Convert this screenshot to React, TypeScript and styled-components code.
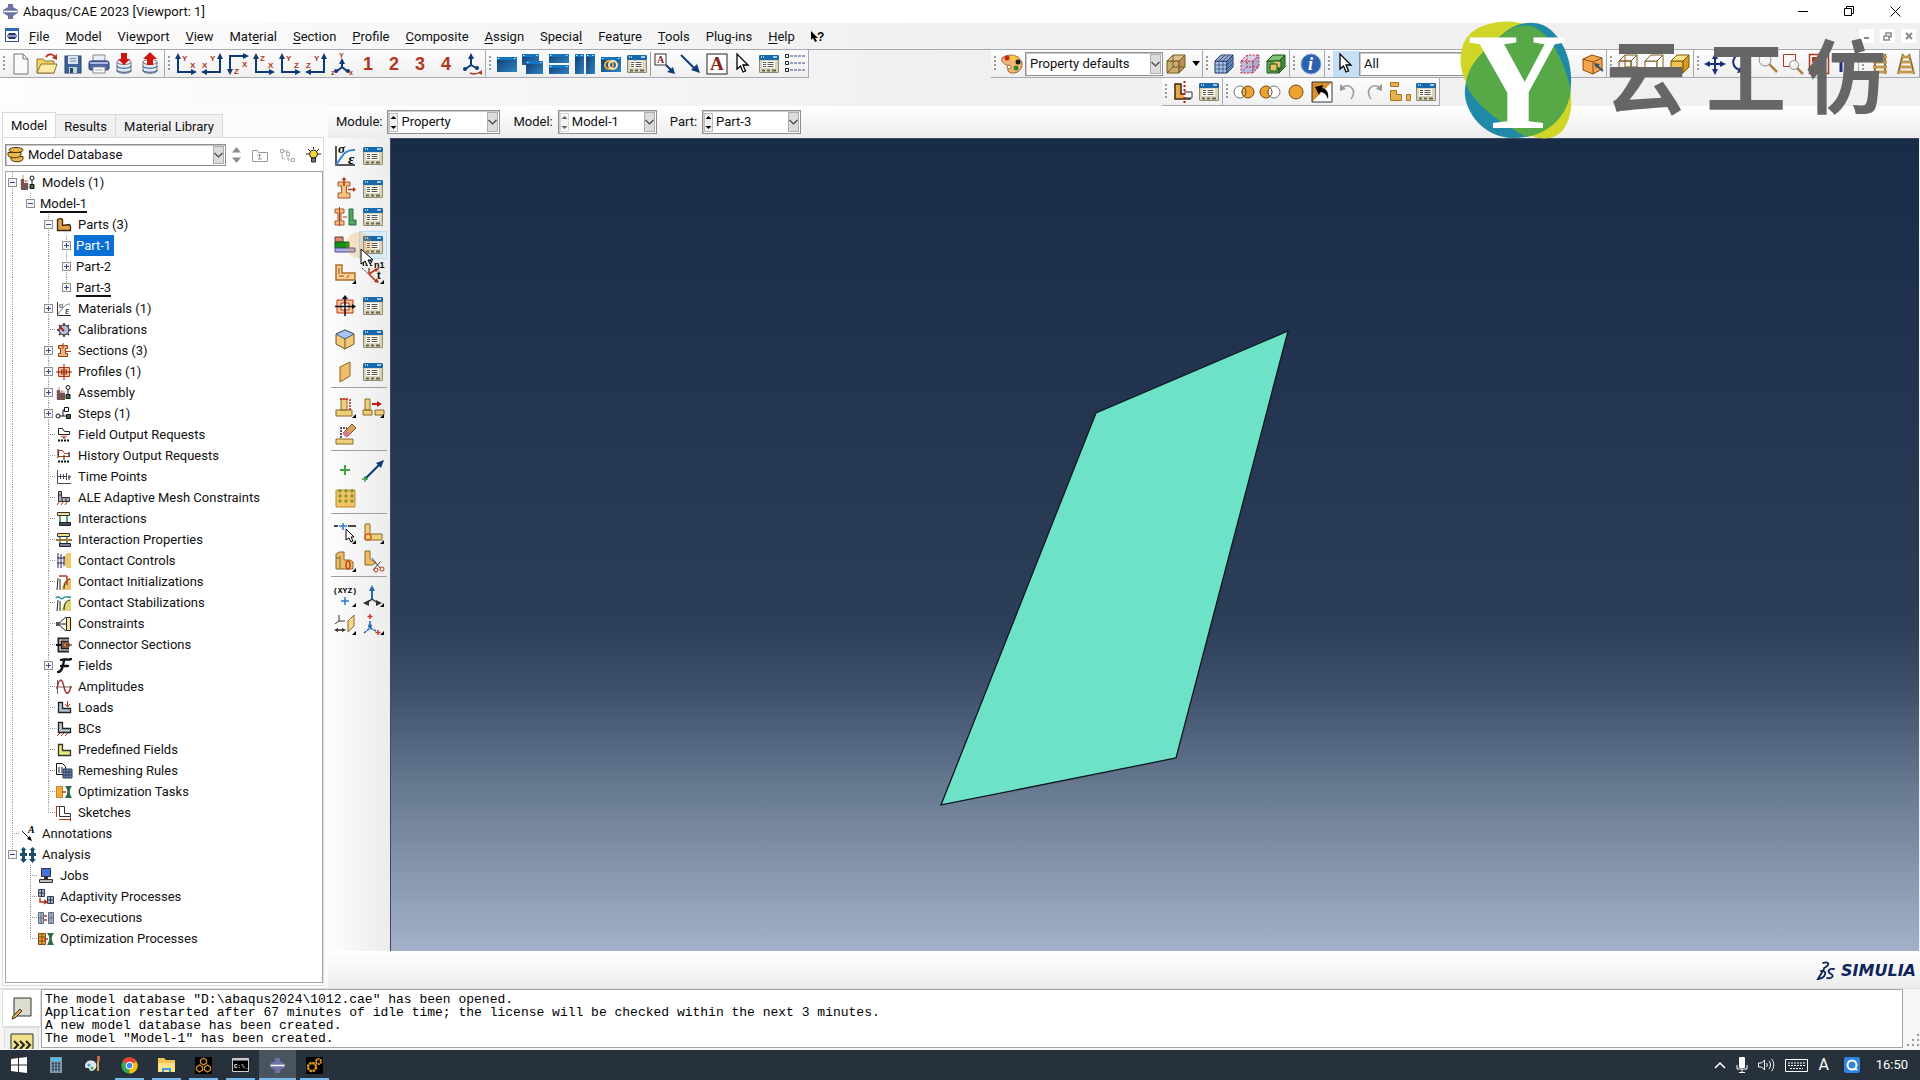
import React from 'react';
import styled, { createGlobalStyle, css } from 'styled-components';

const UI = 'Roboto, "Noto Sans CJK SC", sans-serif';
const MONO = '"Liberation Mono", "Noto Sans CJK SC", monospace';

const GlobalStyle = createGlobalStyle`
  *, *::before, *::after { box-sizing: border-box; }
  body { margin: 0; background: #f0f0f0; color: #111; font: 13px/16px ${UI}; overflow: hidden; }
  button, select, textarea { font: inherit; color: inherit; }
  ul { list-style: none; margin: 0; padding: 0; }
  svg { display: block; flex: none; }
`;

/* ---------- icons ---------- */

const NAVY = '#0f3a78';
const RED = '#b3361b';
const GOLD = '#e8b04e';
const LINE = '#7a5a1e';

type Pt = [number, number];

const head = (x: number, y: number, d: 'u' | 'd' | 'l' | 'r', c = NAVY, s = 3) => {
  const p: Record<string, string> = {
    u: `${x},${y - s} ${x - s},${y + s} ${x + s},${y + s}`,
    d: `${x},${y + s} ${x - s},${y - s} ${x + s},${y - s}`,
    l: `${x - s},${y} ${x + s},${y - s} ${x + s},${y + s}`,
    r: `${x + s},${y} ${x - s},${y - s} ${x - s},${y + s}`,
  };
  return <polygon points={p[d]} fill={c} />;
};

const Letter = ({ x, y, s = 8, c = RED, children }: { x: number; y: number; s?: number; c?: string; children: string }) => (
  <text x={x} y={y} fontSize={s} fontWeight="700" fill={c} fontFamily="Liberation Sans, sans-serif">{children}</text>
);

const axes = (o: Pt, v: 'u' | 'd', h: 'l' | 'r', a: string, ap: Pt, b: string, bp: Pt) => {
  const vy = v === 'u' ? 2 : 20;
  const hx = h === 'r' ? 20 : 2;
  return (
    <>
      <path d={`M${o[0]} ${vy}V${o[1]}H${hx}`} fill="none" stroke={NAVY} strokeWidth="2" />
      {head(o[0], vy + (v === 'u' ? 1 : -1), v)}
      {head(hx + (h === 'r' ? -1 : 1), o[1], h)}
      <Letter x={ap[0]} y={ap[1]}>{a}</Letter>
      <Letter x={bp[0]} y={bp[1]}>{b}</Letter>
    </>
  );
};

const managerTable = (
  <>
    <rect x="1" y="2" width="20" height="18" rx="1.5" fill="#8f8a72" />
    <rect x="1" y="2" width="20" height="5" rx="1.5" fill="#1769ac" />
    <path d="M3 4h1M5 4h1M15 4h4" stroke="#cfe6f7" strokeWidth="1.5" />
    <rect x="2" y="7" width="18" height="12" fill="#d9d4bd" />
    <rect x="4" y="8" width="13" height="7" fill="#fffef4" />
    <path d="M5 9.500h3M9.500 9.500h6M5 11.500h3M9.500 11.500h6M5 13.500h3M9.500 13.500h6" stroke="#555" />
    <path d="M4 17.500h3M9 17.500h3M14 17.500h4" stroke="#6b6548" strokeWidth="2" />
  </>
);

const win = (x: number, y: number, w: number, h: number) => (
  <>
    <rect x={x} y={y} width={w} height={h} fill="url(#winfill)" />
    <path d={`M${x} ${y + 1.5}h${w}`} stroke="#1374c2" strokeWidth="3" />
    <path d={`M${x + 1} ${y + 1.5}h1.500M${x + w - 3} ${y + 1.5}h1.500`} stroke="#cfe8fb" />
  </>
);

const cube = (front: string, top: string, side: string, stroke: string, dash?: string) => (
  <g stroke={stroke} strokeLinejoin="round" strokeDasharray={dash}>
    <path d="M2 8h12v12H2z" fill={front} />
    <path d="M2 8l6-6h12l-6 6z" fill={top} />
    <path d="M14 8l6-6v12l-6 6z" fill={side} />
  </g>
);

const cylinder = (
  <>
    <path d="M3 9v9c0 3 14 3 14 0V9" fill="#e3e9f2" stroke="#777" />
    <path d="M3 13c0 3 14 3 14 0M3 17c0 3 14 3 14 0" fill="none" stroke="#24508c" />
    <ellipse cx="10" cy="9" rx="7" ry="2.500" fill="#f7f9fc" stroke="#777" />
  </>
);

const arrowCursor = (fill: string) => (
  <path d="M5 1v15l3.500-3 2.500 6 2.500-1-2.500-6H16z" fill={fill} stroke="#000" strokeWidth="1.300" />
);

const ibeam = (
  <>
    <path d="M4 4h12v4h-3.500v7H16v5H4v-5h3.500V8H4z" fill="#f3c083" stroke="#a65a22" />
    <path d="M10 0v8M14 11.500h7" stroke={RED} strokeWidth="1.500" />
    <path d="M10-1L7.500 2h5zM22 11.500L19 9v5z" fill={RED} />
  </>
);

const magnifier = (x: number, y: number, r: number) => (
  <>
    <path d={`M${x + r * 0.7} ${y + r * 0.7}L${x + r * 2} ${y + r * 2}`} stroke="#b07f45" strokeWidth="2.500" />
    <circle cx={x} cy={y} r={r} fill="#f1f1f1" stroke="#8f8f8f" />
    <circle cx={x - r / 3} cy={y - r / 3} r={r / 3} fill="#fff" />
  </>
);

const more = <path d="M22 18v4h-4z" fill="#000" />;

const ICONS: Record<string, React.ReactNode> = {
  new: <path d="M4 1h9l5 5v15H4zM13 1v5h5" fill="#fafafa" stroke="#777" />,
  open: (
    <>
      <path d="M1 6h6l2 2h9v12H1z" fill="#f5cf63" stroke="#8a7436" />
      <path d="M5 11h16l-3 9H1z" fill="#ffe9a6" stroke="#8a7436" />
      <path d="M10 4c3-4 7-3 9 0" fill="none" stroke={RED} strokeWidth="2" />
      <path d="M21 1v6l-5-2z" fill={RED} />
    </>
  ),
  save: (
    <>
      <rect x="3" y="3" width="16" height="17" fill="#3d6598" stroke="#27456d" />
      <rect x="6" y="3" width="10" height="8" fill="#dbe4ee" />
      <path d="M8 5.500h6M8 8h6" stroke="#7892b1" />
      <rect x="7" y="14" width="8" height="6" fill="#c8d1da" />
      <rect x="8" y="15" width="3" height="5" fill="#27456d" />
    </>
  ),
  print: (
    <>
      <path d="M5 2h12v6H5z" fill="#e9eef8" stroke="#888" />
      <rect x="1" y="8" width="20" height="9" rx="2" fill="#4c63a4" stroke="#2d3c71" />
      <path d="M2 10h18" stroke="#a9b9e4" strokeWidth="2" />
      <path d="M5 14h12v6H5z" fill="#fff" stroke="#888" />
      <path d="M7 17h8" stroke="#9aa" />
    </>
  ),
  dbin: <>{cylinder}<path d="M7 0h6v6h3l-6 6-6-6h3z" fill="#cf1512" /></>,
  dbout: <>{cylinder}<path d="M7 12V6H3l7-7 7 7h-4v6z" fill="#cf1512" /></>,
  xy: axes([3, 19], 'u', 'r', 'Y', [7, 8], 'X', [15, 15]),
  yx: axes([19, 19], 'u', 'l', 'Y', [9, 8], 'X', [1, 15]),
  xz: axes([3, 3], 'd', 'r', 'Z', [7, 21], 'X', [15, 14]),
  zx: axes([3, 19], 'u', 'r', 'Z', [7, 8], 'X', [15, 15]),
  yz: axes([3, 19], 'u', 'r', 'Y', [7, 8], 'Z', [15, 15]),
  zy: axes([19, 19], 'u', 'l', 'Y', [9, 8], 'Z', [1, 15]),
  iso: (
    <>
      <path d="M11 7v7l-6 5M11 14l6 5" fill="none" stroke={NAVY} strokeWidth="2" />
      {head(11, 8, 'u')}
      <circle cx="5" cy="18" r="2" fill={NAVY} /><circle cx="17" cy="18" r="2" fill={NAVY} />
      <Letter x={8} y={5} s={7}>Y</Letter><Letter x={0} y={22} s={7}>z</Letter><Letter x={18} y={22} s={7}>x</Letter>
    </>
  ),
  view: (
    <>
      <path d="M10 2v10l-7 5M10 12l7 4" fill="none" stroke={NAVY} strokeWidth="2" />
      {head(10, 3, 'u')}
      <circle cx="4" cy="16" r="2" fill={NAVY} /><circle cx="16" cy="15" r="2" fill={NAVY} />
      <path d="M9 20c4 2 7 1 10-1" fill="none" stroke={RED} strokeWidth="1.500" /><path d="M21 17v5l-4-2z" fill={RED} />
    </>
  ),
  win1: win(1, 4, 20, 15),
  win2: <>{win(0, 1, 17, 11)}{win(4, 8, 17, 13)}</>,
  win3: <>{win(1, 1, 20, 9)}{win(1, 12, 20, 9)}</>,
  win4: <>{win(1, 1, 9, 20)}{win(12, 1, 9, 20)}</>,
  win5: (
    <>
      {win(1, 4, 20, 15)}
      <circle cx="9" cy="12" r="4" fill="none" stroke="#f5a623" strokeWidth="2" />
      <circle cx="13" cy="12" r="4" fill="none" stroke="#fbe4b4" strokeWidth="2" />
    </>
  ),
  table: managerTable,
  annArrow: (
    <>
      <rect x="1" y="1" width="11" height="11" fill="#fff" stroke="#333" />
      <text x="3" y="10" fontSize="10" fontWeight="700" fill="#8b2015" fontFamily="Liberation Serif, serif">A</text>
      <path d="M12 12l6 6" stroke={NAVY} strokeWidth="2" /><path d="M21 21l-8-2 6-5z" fill={NAVY} />
    </>
  ),
  arrow: <><path d="M1 2l14 14" stroke={NAVY} strokeWidth="2" /><path d="M20 20l-9-3 6-6z" fill={NAVY} /></>,
  text: (
    <>
      <rect x="1" y="1" width="20" height="20" fill="#fff" stroke="#222" />
      <text x="4" y="17" fontSize="19" fontWeight="700" fill="#8b2015" fontFamily="Liberation Serif, serif">A</text>
    </>
  ),
  cursor: arrowCursor('#fff'),
  legend: (
    <>
      <path d="M1.500 1.500h3v3h-3zM1.500 8.500h3v3h-3zM1.500 15.500h3v3h-3z" fill="#fff" stroke="#222" />
      <path d="M6 3h15M6 10h15M6 17h15" stroke="#2c4a86" strokeDasharray="3 1" />
    </>
  ),
  palette: (
    <>
      <path d="M1 5c5-4 17-5 20 5 1 9-9 12-13 9-3-2 1-5-2-7-4-1-6-4-5-7z" fill="#f3b574" stroke="#a5622a" />
      <circle cx="6" cy="5" r="2.500" fill="#c8251c" /><circle cx="12" cy="5" r="2.500" fill="#f2d224" />
      <circle cx="17" cy="9" r="2.500" fill="#1b1b1b" /><circle cx="15" cy="15" r="2.500" fill="#2e8a2c" />
      <circle cx="8" cy="14" r="2" fill="#fff" stroke="#a5622a" />
    </>
  ),
  cubeTan: <>{cube('#c9ac74', '#d9c08e', '#b59458', '#7a5a1e')}<path d="M8 2v12h12M8 14l-6 6" fill="none" stroke="#7a5a1e" /></>,
  meshBlue: (
    <>
      {cube('#a3bfe6', '#c4d8f2', '#84a3d1', '#1f3566')}
      <path d="M6 8v12M10 8v12M2 12h12M2 16h12M6 8l6-6M10 8l6-6M14 12l6-6M14 16l6-6M4 6h12v12M18 4v12M6 4h12" fill="none" stroke="#1f3566" strokeWidth=".6" />
    </>
  ),
  meshRed: <>{cube('#b6bcdf', '#d2d5ec', '#a5abd1', '#cb2335', '2 1.500')}<path d="M8 2v12h12M8 14l-6 6" fill="none" stroke="#cb2335" strokeDasharray="2 1.500" /></>,
  meshGreen: <>{cube('#5fae57', '#7cc474', '#3f8e3b', '#1d4f1b')}<path d="M5 11h7v7H5zM8 8h8v7h-4" fill="#dfc36c" stroke="#1d4f1b" /></>,
  info: (
    <>
      <circle cx="11" cy="11" r="10" fill="#2c62ae" stroke="#8aa6cf" />
      <text x="8" y="17" fontSize="18" fontStyle="italic" fontWeight="700" fill="#fff" fontFamily="Liberation Serif, serif">i</text>
    </>
  ),
  dot: <><circle cx="6" cy="11" r="4" fill={GOLD} stroke="#5b3d0c" /><path d="M8 21v-3l-3 3z" /></>,
  cubeOrange: (
    <>
      <path d="M1 6l9-4 10 3v11l-9 5-10-4z" fill="#f3a64d" stroke="#8a4a10" />
      <path d="M1 6l10 3 9-4M11 9v12" fill="none" stroke="#8a4a10" />
      <path d="M21 18l-7-6" stroke="#35506f" strokeWidth="2" /><path d="M12 10l6 1-4 4z" fill="#35506f" />
    </>
  ),
  cubeWire: <>{cube('none', 'none', 'none', LINE)}<path d="M8 2v12h12M8 14l-6 6" fill="none" stroke={LINE} /></>,
  cubeHid: cube('#fff', '#fff', '#fff', LINE),
  cubeGold: cube('#f2c14e', '#fbe08f', '#d99b1f', '#7d5708'),
  pan: (
    <>
      <path d="M11 3v16M3 11h16" stroke="#1d2f7c" strokeWidth="2" />
      {head(11, 3, 'u', '#1d2f7c')}{head(11, 19, 'd', '#1d2f7c')}{head(3, 11, 'l', '#1d2f7c')}{head(19, 11, 'r', '#1d2f7c')}
    </>
  ),
  rotate: <><path d="M6 3c-5 5-3 12 4 14" fill="none" stroke="#1d2f7c" strokeWidth="2" /><path d="M14 19l-7 1 3-6z" fill="#1d2f7c" /></>,
  zoom: magnifier(9, 7, 6),
  zoomBox: <><path d="M1.500 1.500h12v12h-12z" fill="none" stroke={RED} />{magnifier(12, 12, 4.5)}</>,
  fit: (
    <>
      <path d="M1.500 1.500h19v19h-19z" fill="none" stroke={RED} strokeWidth="1.500" />
      <path d="M4 4h6l-6 6zM18 18h-6l6-6z" fill={RED} />
      <path d="M5 5l12 12" stroke={RED} strokeWidth="1.500" strokeDasharray="5 3" />
    </>
  ),
  cycle: <><path d="M7 4v15M15 3v15" stroke="#1d2f7c" strokeWidth="3" />{head(7, 4, 'u', '#1d2f7c', 4)}{head(15, 17, 'd', '#1d2f7c', 4)}</>,
  para: (
    <>
      <path d="M6 1v20M16 1v20" stroke="#8a6a31" strokeWidth="2" />
      <path d="M4 4h14M4 9h14M4 14h14M4 19h14" stroke="#c39a4f" strokeWidth="3" />
    </>
  ),
  persp: (
    <>
      <path d="M8 1L3 21M14 1l5 20" stroke="#8a6a31" strokeWidth="2" />
      <path d="M7 4h8M6 9h10M5 14h12M3 19h16" stroke="#c39a4f" strokeWidth="3" />
    </>
  ),
  lpart: (
    <>
      <path d="M3 3h6v10h9v5H3z" fill="#eaa84d" stroke="#3b2a0d" strokeWidth="1.500" />
      <path d="M12 11h8v6h-8" fill="#fff" stroke="#333" />
      <path d="M12.500 0v22" stroke="#c01818" strokeWidth="2" strokeDasharray="2 2" />
    </>
  ),
  circR: (
    <>
      <circle cx="7" cy="11" r="6" fill="#fff" stroke="#777" /><circle cx="15" cy="11" r="6" fill="#f0a22e" stroke="#6d4a10" />
      <path d="M11 6.500a6 6 0 010 9 6 6 0 010-9z" fill="#e6b36a" stroke="#6d4a10" />
    </>
  ),
  circL: (
    <>
      <circle cx="7" cy="11" r="6" fill="#f0a22e" stroke="#6d4a10" /><circle cx="15" cy="11" r="6" fill="#fff" stroke="#777" />
      <path d="M11 6.500a6 6 0 010 9 6 6 0 010-9z" fill="#fff" stroke="#6d4a10" />
    </>
  ),
  circ: <circle cx="11" cy="11" r="7" fill="#f0a22e" stroke="#6d4a10" />,
  replace: (
    <>
      <path d="M1 1h20v20H1z" fill="#fff" /><path d="M1 1h20L1 21z" fill="#d98f2b" />
      <path d="M1 1h20v20H1z" fill="none" stroke="#333" />
      <path d="M4 6l8-2-1 3c5 1 7 5 6 11-2-5-4-7-8-7l-1 3z" fill="#000" />
    </>
  ),
  undo: <><path d="M6 6c8-4 14 4 8 12" fill="none" stroke="#9a9a9a" strokeWidth="1.500" /><path d="M3 3v7l6-2z" fill="#9a9a9a" /></>,
  redo: <><path d="M16 6c-8-4-14 4-8 12" fill="none" stroke="#9a9a9a" strokeWidth="1.500" /><path d="M19 3v7l-6-2z" fill="#9a9a9a" /></>,
  bars: (
    <g fill={GOLD} stroke="#a57524">
      <path d="M1.500 1.500h8v4h-8zM1.500 9.500h6v4h5v6h-11zM17.500 13.500h4v6h-4z" />
    </g>
  ),
  /* toolbox */
  sigma: (
    <>
      <path d="M2 1v19h19" fill="none" stroke="#222" strokeWidth="1.500" />
      <path d="M2 20C8 12 10 4 21 5" fill="none" stroke="#3485d6" strokeWidth="2" />
      <text x="4" y="8" fontSize="13" fontWeight="700" fontStyle="italic" fontFamily="Liberation Serif, serif">σ</text>
      <text x="14" y="19" fontSize="15" fontWeight="700" fontStyle="italic" fontFamily="Liberation Serif, serif">ε</text>
    </>
  ),
  ibeam,
  ibeamL: (
    <>
      <path d="M1 3h9v4H7v8h3v4H1v-4h3V7H1z" fill="#f3c083" stroke="#a65a22" />
      <path d="M5.500 1v19M9 11h4" stroke={RED} />
      <path d="M15 3h4v11h3v5h-7z" fill="#4fa565" stroke="#2c6e3d" />
    </>
  ),
  layers: (
    <>
      <path d="M1 3h8v5H1z" fill="#d98a72" stroke="#6b3b2a" />
      <path d="M1 8h14v6H1z" fill="#129312" stroke="#0b5c0b" />
      <path d="M1 14h20v4H1z" fill="#a9aee8" stroke="#4a4d8c" />
    </>
  ),
  lplate: <><path d="M2 3h6v8h13v7H2z" fill="#f7cf97" stroke="#a8702a" strokeWidth="1.500" /><path d="M5 6v6M5 14l5 0M15 13l-2 3" stroke={RED} />{more}</>,
  normals: (
    <>
      <path d="M0 6l15 14" stroke="#333" strokeDasharray="2 1" />
      <path d="M7 12l8-5M7 12V6M7 12l7 7" stroke={RED} strokeWidth="1.500" />
      <path d="M17 21l-5-1 3-4zM18 6l-4 4-2-3z" fill={RED} />
      <Letter x={0} y={4} s={9} c="#000">n2</Letter><Letter x={12} y={6} s={9} c="#000">n1</Letter><Letter x={15} y={17} s={11} c="#000">t</Letter>{more}
    </>
  ),
  profile: (
    <>
      <path d="M3 5h16v13H3z" fill="#f7c79a" stroke={RED} /><path d="M7 8h8v7H7z" fill="#fff" stroke={RED} />
      <path d="M11 1v20M1 11.500h20" stroke="#111" strokeWidth="1.500" />
      <path d="M11 0L8 4h6zM22 11.500L18 9v5z" fill="#111" />
    </>
  ),
  skin: (
    <>
      <path d="M11 2l9 4v10l-9 5-9-5V6z" fill="#f2c87b" stroke="#74501a" />
      <path d="M11 2l9 4-9 5-9-5z" fill="#a8c4f2" stroke="#46597f" /><path d="M11 11v10" stroke="#74501a" />
    </>
  ),
  shell: <path d="M6 6l10-5v14L6 21z" fill="#f2bd66" stroke="#8a6122" />,
  tee: (
    <>
      <path d="M2 14h16v6H2zM7 3h6v11H7z" fill="#f0cf7b" stroke="#8a6a2a" />
      <path d="M6 3h9M16 3v12" stroke="#c01818" strokeDasharray="2 1" strokeWidth="1.500" />{more}
    </>
  ),
  teeMove: (
    <>
      <path d="M1 14h9v5H1zM3 3h5v11H3zM13 14h9v5h-9z" fill="#f0cf7b" stroke="#8a6a2a" />
      <path d="M10 8h6" stroke="#c01818" strokeWidth="2" /><path d="M20 8l-5-3v6z" fill="#c01818" />{more}
    </>
  ),
  erase: (
    <>
      <path d="M2 15h17v5H2z" fill="#f0cf7b" stroke="#8a6a2a" />
      <path d="M7 14V4h6" fill="none" stroke="#222" strokeDasharray="2 1" strokeWidth="1.500" />
      <path d="M9 9l9-9 4 4-9 9z" fill="#d7a25e" stroke="#7a5420" /><path d="M9 9l3-3 4 4-3 3-3-1z" fill="#d27a93" />
    </>
  ),
  plus: <path d="M11 6v10M6 11h10" stroke="#3fa34a" strokeWidth="2" />,
  datumAxis: (
    <>
      <path d="M3 20L17 6" stroke={NAVY} strokeWidth="2" /><path d="M22 1l-3 8-5-5z" fill={NAVY} />
      <path d="M3 17v6M0 20h6" stroke="#3fa34a" strokeWidth="1.500" />
    </>
  ),
  grid: (
    <>
      <path d="M2 3h19v17H2z" fill="#f4c260" stroke="#b98a2f" />
      <path d="M4 4h4M10 4h4M16 4h4M4 9h4M10 9h4M16 9h4M4 14h4M10 14h4M16 14h4M6 2v4M12 2v4M18 2v4M6 7v4M12 7v4M18 7v4M6 12v4M12 12v4M18 12v4" stroke="#5c8f2b" />
    </>
  ),
  partEdge: (
    <>
      <path d="M0 4h4M14 4h8" stroke="#111" strokeWidth="1.500" /><path d="M9 1v7M5 4h8" stroke="#2b78d0" strokeWidth="1.500" />
      <path d="M12 7v11l3-2 2 4 2-1-2-4h3z" fill="#fff" stroke="#000" />{more}
    </>
  ),
  lround: <><path d="M3 2h5v10h12v6H3z" fill="#f0cf7b" stroke="#8a6a2a" /><circle cx="6" cy="15" r="3" fill="none" stroke="#d2601c" strokeWidth="1.500" />{more}</>,
  partCell: <><path d="M2 4l3-2h5v8h6l3 2v7H2z" fill="#e7bd6a" stroke="#8a6a2a" /><path d="M6 6v13M2 8h4" stroke="#8a6a2a" /><ellipse cx="14" cy="15" rx="2" ry="4" fill="none" stroke="#c4410f" strokeWidth="1.500" />{more}</>,
  cut: (
    <>
      <path d="M3 1h5v8l6 4-4 2H3z" fill="#eebb62" stroke="#8a6a2a" />
      <path d="M10 8l8 10M18 12l-7 8" stroke="#444" /><circle cx="14" cy="20" r="2" fill="none" stroke={RED} /><circle cx="20" cy="19" r="2" fill="none" stroke={RED} />
    </>
  ),
  xyz: (
    <>
      <text x="-1" y="8" fontSize="8" fontWeight="700" fontFamily="Liberation Mono, monospace">(XYZ)</text>
      <path d="M11 12v8M7 16h8" stroke="#2b78d0" strokeWidth="1.500" />{more}
    </>
  ),
  csys: <><path d="M10 2v12l-7 5M10 14l7 5" fill="none" stroke="#333" strokeWidth="1.500" /><path d="M10 4v10" stroke="#2468b5" strokeWidth="2" />{head(10, 3, 'u', '#2468b5')}{head(4, 18, 'l', '#333')}{head(17, 18, 'r', '#333')}{more}</>,
  offset: (
    <>
      <path d="M5 2v6l-4 3M5 8h6" fill="none" stroke="#333" /><path d="M2 17h8" stroke="#333" strokeWidth="1.500" />
      {head(2, 17, 'l', '#333', 2)}{head(10, 17, 'r', '#333', 2)}
      <path d="M14 8l6-6v11l-6 6z" fill="#f4d890" stroke="#8a6a2a" />{more}
    </>
  ),
  csysDots: (
    <>
      <path d="M8 1v5M5.500 3.500h5M16 17v5M13.500 19.500h5" stroke="#c93c2c" strokeWidth="1.500" />
      <path d="M8 8v7l-6 5M8 15l6 3" fill="none" stroke="#2468b5" strokeWidth="1.500" strokeDasharray="3 1" />
      <circle cx="8" cy="13" r="2" fill="#2468b5" />{more}
    </>
  ),
};

/* tree icons, 16 px grid */
const TREE: Record<string, React.ReactNode> = {
  models: <><path d="M1 4h3v4h4v7H1z" fill="#555" /><path d="M0 6h8M0 9h9M0 12h9M3 0v15M6 5v10" stroke="#a55" strokeWidth=".7" /><circle cx="12" cy="3" r="2" fill="#fff" stroke="#111" /><path d="M12 5v4" stroke="#111" /><path d="M10 9.500h4v4h-4z" fill="#3f6e42" stroke="#111" /></>,
  parts: <path d="M1.500 2.500l3-1 2 1v6l7-1 1 2v4h-13z" fill="#e0a24a" stroke="#3a270a" strokeWidth="1.300" />,
  materials: <><path d="M1.500 1v13.500H15" fill="none" stroke="#333" /><path d="M2 13l5-6c2-3 4-4 7-4" fill="none" stroke="#7a8798" /><text x="3" y="7" fontSize="8" fontFamily="Liberation Serif">σ</text><text x="9" y="13" fontSize="11" fontFamily="Liberation Serif">ε</text></>,
  calib: <><path d="M8 1v14M1 8h14M3 3l10 10M13 3L3 13" stroke="#222" strokeWidth="1.500" /><circle cx="8" cy="8" r="5" fill="#b9bddb" stroke="#222" /><path d="M4 5l4 4" stroke="#a32020" strokeWidth="2" /></>,
  sections: <><path d="M2.500 2.500h9v3h-2v5h2v3h-9v-3h2v-5h-2z" fill="#f3b27c" stroke="#8a3f14" /><path d="M7 0v6M9 8.500h6" stroke={RED} /></>,
  profiles: <><path d="M2.500 3.500h11v9h-11zM5.500 6h5v4h-5z" fill="#f6bb98" stroke={RED} /><path d="M8 0v16M0 8h16" stroke="#7a2008" /></>,
  assembly: <><path d="M1 5h3v3h5v7H1z" fill="#555" /><path d="M0 7h9M0 10h9M0 13h9M3 2v13M6 5v10" stroke="#a55" strokeWidth=".7" /><circle cx="12" cy="2.500" r="2" fill="#fff" stroke="#111" /><path d="M12 5v4" stroke="#111" /><path d="M10 9.500h4v4h-4z" fill="#3f6e42" stroke="#111" /></>,
  steps: <><circle cx="2" cy="10" r="2" fill="#fff" stroke="#111" /><path d="M4 10h3V4h2M7 10h3" fill="none" stroke="#111" /><path d="M8.500 1.500h4v4h-4z" fill="#fff" stroke="#111" /><path d="M10.500 8.500h4v4h-4z" fill="#3f6e42" stroke="#111" /></>,
  field: <><path d="M2.500 1.500h4l2 3h5v3h-11z" fill="#fff" stroke="#222" /><path d="M8 7v5M5 9l3 2 3-2" stroke={RED} fill="none" /><path d="M2 13.500h12" stroke="#111" strokeWidth="2" strokeDasharray="2 1" /></>,
  history: <><path d="M2.500 2.500h4l2 3h5v3h-11z" fill="#fff" stroke={RED} /><path d="M2 1v9M8 7v5M13 4v5" stroke="#222" fill="none" /><path d="M2 13.500h12" stroke="#111" strokeWidth="2" strokeDasharray="2 1" /></>,
  time: <><path d="M1.500 1v13.500H15M1 7.500h10M4.500 5v5M7.500 5v5M10.500 4v7" fill="none" stroke="#444a66" /><path d="M13 6v5M12 8h3" stroke="#333" /></>,
  ale: <><path d="M2.500 1.500h3v6h8v4h-11zM2 5h4M6 8v4M10 8v4" fill="#a9adb5" stroke="#333" /><path d="M1 15l2-3M5 15l2-3M9 15l2-3" stroke={RED} /></>,
  inter: <><path d="M1.500 1.500h12v3h-12z" fill="#ece08c" stroke="#333" /><path d="M4 5v7M11 5v7" stroke="#2c8a55" strokeWidth="1.500" /><path d="M3.500 11.500h11v3h-11z" fill="#3a4a63" stroke="#222" /></>,
  interProp: <><path d="M1.500 1.500h12v3h-12z" fill="#ece08c" stroke="#333" /><path d="M4 5v7M11 5v7" stroke="#2c8a55" strokeWidth="1.500" /><path d="M0 8h16" stroke="#b0703c" strokeWidth="2" /><path d="M3.500 11.500h11v3h-11z" fill="#77869c" stroke="#222" /></>,
  cctrl: <><path d="M15 0v15h-4C7 12 7 3 11 0z" fill="#ecc96a" /><path d="M2 0v15M5 1v14M8 3v10M1 5h8M1 10h7" stroke="#33205a" /></>,
  cinit: <><path d="M15 4v12H6c0-6 3-11 9-12z" fill="#f0c268" /><path d="M2 4l-1 12M4 5v11M8 15c0-6 2-9 6-10" fill="none" stroke="#222" /><path d="M3 2h8M11 2v9" stroke={RED} strokeWidth="1.500" /></>,
  cstab: <><path d="M15 4v12H6c0-6 3-11 9-12z" fill="#dfd676" /><path d="M2 5l-1 11M4 6v10M8 15c0-6 2-9 6-10" fill="none" stroke="#222" /><path d="M0 3c3-4 4 3 7 0s5 0 8-1" fill="none" stroke="#2a8f90" strokeWidth="1.500" /></>,
  constr: <><path d="M10.500 1.500h4v13h-4z" fill="#f5e687" stroke="#222" /><path d="M10 1L2 8l8 7M2 8h8" fill="none" stroke="#222" /><path d="M0 6h4v4H0z" fill="#555" /></>,
  conn: <><path d="M13 1.500H2.500v13H13M13 4.500H5.500v7H13" fill="none" stroke="#222" strokeWidth="2" /><path d="M4 2v12" stroke="#a9b4c4" /><path d="M0 8h5" stroke="#111" strokeWidth="2" /><path d="M7 6h6v4H7z" fill="#d98a4a" stroke="#6a2c12" /><path d="M10 8h6" stroke="#111" /></>,
  fields: <path d="M5 2c4-2 7 1 10-1M8 2.500C7 8 6 14 2 14M5 8h7" fill="none" stroke="#111" strokeWidth="2.300" strokeLinecap="round" />,
  amp: <><path d="M1.500 1v14M0 8h16" stroke="#667" /><path d="M1 10C3-2 6-1 8 8s5 8 7-1" fill="none" stroke="#a33030" strokeWidth="1.500" /></>,
  loads: <><path d="M2.500 2.500h4v6h8v4h-12z" fill="#b6c4d6" stroke="#222" strokeWidth="1.300" /><path d="M11.500 1v6M9 4l2.500 3L14 4" stroke={RED} fill="none" /></>,
  bcs: <><path d="M2.500 1.500h4v6h8v4h-12z" fill="#b6c4d6" stroke="#222" strokeWidth="1.300" /><path d="M1 15l3-3M5 15l3-3M9 15l3-3" stroke={RED} /></>,
  predef: <path d="M2.500 2.500h4v6h8v5h-12z" fill="#e6e778" stroke="#333" strokeWidth="1.300" />,
  remesh: <><path d="M.5.500h6l3 3v8h-9z" fill="#fff" stroke="#111" /><path d="M2 5h5M2 7h5M2 9h5" stroke="#111" strokeDasharray="2 1" /><path d="M7 6h9v9H7z" fill="#6f86ad" stroke="#2f3f5e" /><path d="M10 6v9M13 6v9M7 9h9M7 12h9" stroke="#2f3f5e" /></>,
  optim: <><path d="M.5 2.500h6v11h-6z" fill="#f0a93a" stroke="#c08930" /><path d="M9 2h7c-3 4-3 7 0 12H9c3-5 3-8 0-12z" fill="#2c6b41" /><path d="M6 8h4" stroke={RED} strokeWidth="1.500" /></>,
  sketch: <><path d="M3.500 1.500h5v7h6v3h-11z" fill="#fff" stroke="#333" /><path d="M.500 1v11M3 14.500h12M1 1.500h2M14.500 12v4" stroke={RED} /></>,
  annot: <><path d="M2 5l9 9" stroke="#111" /><path d="M12 15l-5-2 3-3z" /><text x="8" y="7" fontSize="10" fontWeight="700" fontStyle="italic" fontFamily="Liberation Serif">A</text></>,
  analysis: <g fill="#1d4d6e"><path d="M3.500 0l3 3H5v3h2v3H5v3h2l-3.500 4L0 12h2V9H0V6h2V3H.5z" /><path d="M12.500 0l3 3H14v3h2v3h-2v3h2l-3.500 4L9 12h2V9H9V6h2V3H9.500z" /></g>,
  jobs: <><path d="M3.500.500h9v8h-9z" fill="#4a6fe0" stroke="#333" /><path d="M6 9h4v2H6z" fill="#333" /><path d="M1.500 11.500h13v3h-13z" fill="#bbb" stroke="#333" /></>,
  adapt: <><path d="M.500.500h6v7h-6zM9.500 7.500h6v7h-6z" fill="#9fb0c9" stroke="#333f55" /><path d="M3.500 1v7M0 4h7M12.500 8v7M9 11h7" stroke="#333f55" /><path d="M2 9v4h6M6 11l3 2-3 2" fill="none" stroke={RED} strokeWidth="1.500" /></>,
  coexec: <><path d="M.5 2.500h5v11h-5zM10.500 2.500h5v11h-5z" fill="#b3bccb" stroke="#5f6b82" /><path d="M3 3v11M0 8h6M13 3v11M10 8h6" stroke="#5f6b82" /><path d="M6 6h4M6 10h4" stroke={RED} strokeWidth="1.500" strokeDasharray="3 1" /></>,
  optproc: <><path d="M.5 2.500h7v11h-7z" fill="#e6a03c" stroke="#7b4a12" /><path d="M4 2v12M0 6h8M0 10h8" stroke="#7b4a12" /><path d="M9 2h7c-3 4-3 7 0 12H9c3-5 3-8 0-12z" fill="#2c6b41" /><path d="M6 8h4" stroke={RED} strokeWidth="1.500" /></>,
};

const Icon = ({ name }: { name: string }) => (
  <svg width="22" height="22" viewBox="0 0 22 22" overflow="visible" aria-hidden="true">{ICONS[name]}</svg>
);

/* ---------- shell ---------- */

const Page = styled.div`display: flex; flex-direction: column; height: 100vh; position: relative;`;
const Defs = styled.svg`position: absolute;`;
const TitleBar = styled.header`
  display: flex; align-items: center; gap: 5px; height: 23px; padding: 0 2px 0 3px; background: #fff;
`;
const WinButtons = styled.div`display: flex; margin-left: auto;`;
const WinButton = styled.button`
  display: grid; place-items: center; width: 46px; height: 22px; padding: 0; border: 0; background: none;
`;
const MenuBar = styled.nav`
  display: flex; align-items: center; height: 27px; padding: 0 4px; gap: 2px;
  background: linear-gradient(to right, #fcfcfc, #f0f0f0 50%); border-bottom: 1px solid #a9a9b1;
`;
const DocIcon = styled.svg`margin: 0 1px 2px;`;
const MenuItem = styled.button`
  height: 22px; padding: 1px 7px 0; border: 0; background: none;
  u { text-underline-offset: 2px; }
`;
const MdiGroup = styled.div`display: flex; gap: 6px; margin-left: auto;`;
const MdiButton = styled.button`
  display: grid; place-items: center; width: 15px; height: 14px; padding: 0; border: 0; background: #fff;
`;
const ToolbarArea = styled.div`background: linear-gradient(to right, #fdfdfd, #f0f0f0 50%); height: 56px;`;
const ToolRow = styled.div`display: flex; height: 28px;`;
const Side = styled.div<{ $right?: boolean; $inset?: number }>`
  display: flex; ${p => p.$right && css`margin-left: auto;`} margin-right: ${p => p.$inset || 0}px;
`;
const Group = styled.div`
  display: flex; align-items: center; height: 28px;
  background: linear-gradient(#fdfdfd, #efefef);
  border: solid #a9a9b1; border-width: 0 1px 1px 0;
`;
const Grip = styled.span`
  width: 8px; height: 15px; background: repeating-linear-gradient(#9a9a9a 0 2px, transparent 2px 4px) 3px 0 / 2px 100% no-repeat;
`;
const ToolButton = styled.button<{ $on?: boolean }>`
  display: grid; place-items: center; width: 26px; height: 26px; padding: 0; border: 0;
  background: ${p => (p.$on ? '#c5dff6' : 'none')};
`;
const NumberButton = styled(ToolButton)`color: ${RED}; font: 700 18px/20px "Liberation Sans", sans-serif;`;
const Divider = styled.span`width: 1px; height: 24px; margin-right: 1px; background: #999;`;
const Caret = styled.span`
  width: 13px; height: 5px; background: #000; clip-path: polygon(25% 0, 85% 0, 55% 100%);
`;

/* ---------- combo ---------- */

const ComboBox = styled.div<{ $w: number; $h: number }>`
  display: flex; align-items: center; width: ${p => p.$w}px; height: ${p => p.$h}px;
  background: #fff; border: 1px solid #8f8f8f; box-shadow: inset 1px 1px 0 #c9c9c9; padding: 1px;
`;
const Select = styled.select`
  appearance: none; flex: 1; min-width: 0; height: 100%; padding: 0 3px; border: 0; background: none; outline: 0;
`;
const Drop = styled.span`
  display: grid; place-items: center; width: 11px; height: 100%; background: #dcdcdc; border: 1px solid #adadad;
`;
const Spin = styled.span<{ $dim?: boolean }>`
  display: grid; place-items: center; width: 9px; height: 19px; background: #f0f0f0; border: 1px solid #bbb; opacity: ${p => (p.$dim ? 0.6 : 1)};
`;

function Combo({ id, value, w, h = 24, spin, dim, lead, label }: {
  id: string; value: string; w: number; h?: number; spin?: boolean; dim?: boolean; lead?: React.ReactNode; label?: string;
}) {
  return (
    <ComboBox $w={w} $h={h}>
      {lead}
      {spin && (
        <Spin $dim={dim}><svg width="7" height="15" viewBox="0 0 7 15"><path d="M3.500 1l3 3h-6zM3.500 14l3-3h-6z" /></svg></Spin>
      )}
      <Select id={id} aria-label={label} defaultValue={value}><option>{value}</option></Select>
      <Drop><svg width="9" height="6" viewBox="0 0 9 6"><path d="M.5 1l4 4 4-4" fill="none" stroke="#444" strokeWidth="1.200" /></svg></Drop>
    </ComboBox>
  );
}

/* ---------- body ---------- */

const Body = styled.main`flex: 1; display: flex; min-height: 0;`;
const LeftPanel = styled.aside`
  width: 328px; flex: none; display: flex; flex-direction: column; padding: 6px 4px 2px 2px; background: #fbfbfb;
`;
const Tabs = styled.div`display: flex; align-items: flex-end; height: 25px;`;
const Tab = styled.button<{ $on?: boolean }>`
  height: ${p => (p.$on ? 25 : 23)}px; padding: 1px 8px 0; border: 1px solid #d9d9d9; border-bottom: 0; margin-right: -1px;
  background: ${p => (p.$on ? '#fff' : '#f0f0f0')};
`;
const TabPanel = styled.div`
  flex: 1; display: flex; flex-direction: column; gap: 5px; min-height: 0; padding: 6px 0 2px 2px;
  border: 1px solid #dcdcdc; background: #fff;
`;
const DbRow = styled.div`display: flex; align-items: center; gap: 6px; height: 22px;`;
const DbTools = styled.div`display: flex; align-items: center; justify-content: space-between; flex: 1; padding-right: 2px;`;
const IconButton = styled.button`display: grid; place-items: center; padding: 0; border: 0; background: none;`;
const TreeBox = styled.ul`
  flex: 1; min-height: 0; overflow: hidden; border: 1px solid #a5a5a5; padding: 0 2px;
`;
const Row = styled.li`display: flex; align-items: center; height: 21px;`;
const Guide = styled.span<{ $v: 'none' | 'full' | 'half'; $last?: boolean; $stub?: boolean }>`
  display: flex; align-items: center; height: 21px; width: ${p => (p.$last ? 12 : 18)}px;
  background:
    ${p => (p.$stub ? 'repeating-linear-gradient(to right, #999 0 1px, transparent 1px 2px) 4px 10px / 8px 1px no-repeat,' : '')}
    repeating-linear-gradient(#999 0 1px, transparent 1px 2px) 4px 0 / ${p => (p.$v === 'none' ? '0 0' : p.$v === 'full' ? '1px 21px' : '1px 11px')} no-repeat;
`;
const Expander = styled.button`
  display: grid; place-items: center; width: 9px; height: 9px; padding: 0; border: 1px solid #8e8f8f; background: #f4f4f4;
`;
const TreeText = styled.span<{ $sel?: boolean; $ul?: boolean; $icon?: boolean }>`
  display: flex; align-items: center; height: 21px; padding: 0 3px 0 2px; margin-left: ${p => (p.$icon ? 4 : 0)}px;
  background: ${p => (p.$sel ? '#0a70d6' : 'none')}; color: ${p => (p.$sel ? '#fff' : '#111')};
  span { ${p => p.$ul && css`box-shadow: 0 2px 0 #111; line-height: 15px;`} }
`;

type Item = [number, string, string, ('+' | '-')?, ('sel' | 'ul')?];
const ITEMS: Item[] = [
  [0, 'models', 'Models (1)', '-'],
  [1, '', 'Model-1', '-', 'ul'],
  [2, 'parts', 'Parts (3)', '-'],
  [3, '', 'Part-1', '+', 'sel'],
  [3, '', 'Part-2', '+'],
  [3, '', 'Part-3', '+', 'ul'],
  [2, 'materials', 'Materials (1)', '+'],
  [2, 'calib', 'Calibrations'],
  [2, 'sections', 'Sections (3)', '+'],
  [2, 'profiles', 'Profiles (1)', '+'],
  [2, 'assembly', 'Assembly', '+'],
  [2, 'steps', 'Steps (1)', '+'],
  [2, 'field', 'Field Output Requests'],
  [2, 'history', 'History Output Requests'],
  [2, 'time', 'Time Points'],
  [2, 'ale', 'ALE Adaptive Mesh Constraints'],
  [2, 'inter', 'Interactions'],
  [2, 'interProp', 'Interaction Properties'],
  [2, 'cctrl', 'Contact Controls'],
  [2, 'cinit', 'Contact Initializations'],
  [2, 'cstab', 'Contact Stabilizations'],
  [2, 'constr', 'Constraints'],
  [2, 'conn', 'Connector Sections'],
  [2, 'fields', 'Fields', '+'],
  [2, 'amp', 'Amplitudes'],
  [2, 'loads', 'Loads'],
  [2, 'bcs', 'BCs'],
  [2, 'predef', 'Predefined Fields'],
  [2, 'remesh', 'Remeshing Rules'],
  [2, 'optim', 'Optimization Tasks'],
  [2, 'sketch', 'Sketches'],
  [0, 'annot', 'Annotations'],
  [0, 'analysis', 'Analysis', '-'],
  [1, 'jobs', 'Jobs'],
  [1, 'adapt', 'Adaptivity Processes'],
  [1, 'coexec', 'Co-executions'],
  [1, 'optproc', 'Optimization Processes'],
];

const continues = (i: number, level: number) => {
  for (let j = i + 1; j < ITEMS.length; j++) {
    if (ITEMS[j][0] < level) return false;
    if (ITEMS[j][0] === level) return true;
  }
  return false;
};

function Tree() {
  return (
    <TreeBox role="tree" aria-label="Model tree">
      {ITEMS.map(([level, icon, text, exp, mark], i) => (
        <Row key={text} role="treeitem" aria-level={level + 1}>
          {Array.from({ length: level }, (_, l) => <Guide key={l} $v={continues(i, l) ? 'full' : 'none'} />)}
          <Guide $last $stub={!exp} $v={continues(i, level) ? 'full' : 'half'}>
            {exp && (
              <Expander aria-label={exp === '+' ? 'Expand' : 'Collapse'}>
                <svg width="7" height="7" viewBox="0 0 7 7"><path d={exp === '+' ? 'M1 3.500h5M3.500 1v5' : 'M1 3.500h5'} stroke="#3a4a8a" /></svg>
              </Expander>
            )}
          </Guide>
          {icon && <svg width="16" height="16" viewBox="0 0 16 16" overflow="visible">{TREE[icon]}</svg>}
          <TreeText $icon={!!icon} $sel={mark === 'sel'} $ul={mark === 'ul'}><span>{text}</span></TreeText>
        </Row>
      ))}
    </TreeBox>
  );
}

const RightPanel = styled.section`flex: 1; min-width: 0; display: flex; flex-direction: column;`;
const ContextBar = styled.div`
  display: flex; align-items: center; height: 32px; padding: 0 8px; background: linear-gradient(#fff, #ececec);
`;
const ContextField = styled.div`display: flex; align-items: center; gap: 5px; margin-right: 13px;`;
const Work = styled.div`flex: 1; display: flex; min-height: 0;`;
const Toolbox = styled.div`
  position: relative; width: 62px; flex: none; padding: 4px 3px; background: linear-gradient(to right, #fdfdfd, #ececec);
`;
const ToolGroup = styled.div<{ $rule?: boolean }>`
  display: grid; grid-template-columns: 28px 28px; margin-bottom: ${p => (p.$rule ? 1 : 5)}px;
`;
const Rule = styled.hr`height: 1px; margin: 0 0 5px; border: 0; background: #9f9f9f;`;
const BoxButton = styled.button<{ $hot?: boolean }>`
  display: grid; place-items: center; width: 28px; height: 28px; padding: 0;
  border: 1px solid ${p => (p.$hot ? '#b9dcf5' : 'transparent')}; background: ${p => (p.$hot ? '#d9ecfa' : 'none')};
`;
const Pointer = styled.div`position: absolute; left: 16px; top: 88px; pointer-events: none;`;
const Viewport = styled.div`
  flex: 1; min-width: 0; margin-right: 1px; border: 1px solid #3c4a60; border-width: 1px 0 0 1px;
  background: linear-gradient(#192c47, #22344f 30%, #2d3e58 60%, #3f506b 68%, #687992 80%, #a3b2ca);
  svg { width: 100%; height: 100%; }
`;
const BrandStrip = styled.div`
  display: flex; align-items: center; justify-content: flex-end; gap: 5px; height: 37px; padding: 2px 4px 0;
  background: linear-gradient(#fff, #ececec); color: #10245c;
`;
const BrandName = styled.span`font: oblique 700 16px/20px "DejaVu Sans", sans-serif;`;

const MessageArea = styled.section`display: flex; height: 62px; padding: 0 17px 3px 2px; background: #f6f6f6; border-top: 1px solid #ddd;`;
const MsgTabs = styled.div`width: 39px; height: 60px; overflow: hidden;`;
const MsgTab = styled.button<{ $on?: boolean }>`
  display: grid; place-items: center; width: ${p => (p.$on ? 39 : 35)}px; height: 38px; margin: 0 auto; padding: 0;
  border: 1px solid #dcdcdc; background: ${p => (p.$on ? '#fff' : '#f0f0f0')};
`;
const Messages = styled.textarea`
  flex: 1; height: 59px; padding: 3px; border: 1px solid #a5a5a5; resize: none; overflow: hidden; outline: 0;
  background: #fff; color: #000; font: 13px/13px ${MONO}; white-space: pre;
`;
const SizeGrip = styled.svg`position: absolute; right: 1px; bottom: 33px;`;

const Taskbar = styled.footer`display: flex; height: 30px; background: #26313b; color: #fff;`;
const TaskButton = styled.button<{ $run?: boolean; $on?: boolean }>`
  display: grid; place-items: center; width: 37px; height: 30px; padding: 0; border: 0;
  background: ${p => (p.$on ? '#4a545e' : 'none')};
  svg { overflow: visible; }
  ${p => p.$run && css`
    &::after { content: ''; align-self: end; grid-area: 1 / 1; width: ${p.$on ? 37 : 29}px; height: 2px; background: #76b9ed; }
    svg { grid-area: 1 / 1; }
  `}
  grid-template-rows: 30px;
`;
const Tray = styled.div`display: flex; align-items: center; gap: 10px; margin-left: auto; padding-right: 12px;`;
const Ime = styled.span`width: 12px; margin-right: 4px; font-size: 16px; text-align: center;`;
const Clock = styled.span`margin-left: 6px;`;

const Watermark = styled.div`
  position: absolute; top: 16px; right: 34px; display: flex; align-items: center; gap: 32px; pointer-events: none;
  svg { overflow: visible; }
`;
const WatermarkText = styled.div`
  display: flex; gap: 20px; padding-bottom: 16px; color: #666; font: 700 80px/112px "Noto Sans CJK SC", sans-serif;
`;

/* ---------- data ---------- */

const MENUS: [string, string, string][] = [
  ['', 'F', 'ile'], ['', 'M', 'odel'], ['Vie', 'w', 'port'], ['', 'V', 'iew'], ['Mat', 'e', 'rial'], ['', 'S', 'ection'],
  ['', 'P', 'rofile'], ['', 'C', 'omposite'], ['', 'A', 'ssign'], ['Specia', 'l', ''], ['Feat', 'u', 're'], ['', 'T', 'ools'],
  ['Plu', 'g', '-ins'], ['', 'H', 'elp'],
];

const TOOLBOX: { rows: string[]; rule?: boolean }[] = [
  { rows: ['sigma', 'table'] },
  { rows: ['ibeam', 'table', 'ibeamL', 'table', 'layers', 'table*', 'lplate', 'normals'] },
  { rows: ['profile', 'table'] },
  { rows: ['skin', 'table'] },
  { rows: ['shell', 'table'], rule: true },
  { rows: ['tee', 'teeMove', 'erase'], rule: true },
  { rows: ['plus', 'datumAxis', 'grid'], rule: true },
  { rows: ['partEdge', 'lround', 'partCell', 'cut'], rule: true },
  { rows: ['xyz', 'csys', 'offset', 'csysDots'] },
];

const Tools = ({ names }: { names: string[] }) => (
  <>{names.map((n, i) => <ToolButton key={i} aria-label={n}><Icon name={n} /></ToolButton>)}</>
);

const AbaqusMark = () => (
  <svg width="15" height="15" viewBox="0 0 15 15"><path d="M5 0h5v3l5 3H0l5-3zM5 15h5v-3l5-3H0l5 3z" fill="#6d73a6" /><path d="M0 6h15v3H0z" fill="#8e94bd" /><path d="M1 7.500h13" stroke="#fff" /></svg>
);

const MESSAGES = `The model database "D:\\abaqus2024\\1012.cae" has been opened.
Application restarted after 67 minutes of idle time; the license will be checked within the next 3 minutes.
A new model database has been created.
The model "Model-1" has been created.`;

export default function App() {
  return (
    <Page>
      <GlobalStyle />
      <Defs width="0" height="0" aria-hidden="true">
        <defs><linearGradient id="winfill" x1="0" y1="0" x2="1" y2="1"><stop offset="0" stopColor="#0f3c6b" /><stop offset="1" stopColor="#2f83c4" /></linearGradient></defs>
      </Defs>
      <TitleBar>
        <AbaqusMark />
        <span>Abaqus/CAE 2023 [Viewport: 1]</span>
        <WinButtons>
          <WinButton aria-label="Minimize"><svg width="11" height="11"><path d="M0 5.500h10" stroke="#000" /></svg></WinButton>
          <WinButton aria-label="Restore"><svg width="11" height="11"><path d="M.5 2.500h7v7h-7zM2.500 2.500v-2h7v7h-2" fill="none" stroke="#000" /></svg></WinButton>
          <WinButton aria-label="Close"><svg width="11" height="11"><path d="M.5.500l10 10M10.500.500l-10 10" stroke="#000" /></svg></WinButton>
        </WinButtons>
      </TitleBar>
      <MenuBar>
        <DocIcon width="14" height="14" viewBox="0 0 14 14"><path d="M.5.500h13v13H.5z" fill="#fff" stroke="#24508c" /><path d="M0 1.500h14" stroke="#2d6bb5" strokeWidth="3" /><path d="M4 5h6l2 3-2 3H4L2 8z" fill="#26366e" /><path d="M3 8h8" stroke="#fff" /></DocIcon>
        {MENUS.map(([a, k, b]) => <MenuItem key={a + k + b}>{a}<u>{k}</u>{b}</MenuItem>)}
        <MenuItem aria-label="Context help">
          <svg width="14" height="12" viewBox="0 0 14 12" overflow="visible"><path d="M0 0v9l2-2 2 4 2-1-2-3h3z" /><text x="6" y="10" fontSize="12" fontWeight="700" fontFamily="Liberation Sans">?</text></svg>
        </MenuItem>
        <MdiGroup>
          <MdiButton aria-label="Minimize viewport"><svg width="8" height="8"><path d="M1 6h5" stroke="#888" strokeWidth="2" /></svg></MdiButton>
          <MdiButton aria-label="Restore viewport"><svg width="9" height="9"><path d="M1 4h5v4H1zM3 3V1h5v4H6" fill="none" stroke="#888" strokeWidth="1.500" /></svg></MdiButton>
          <MdiButton aria-label="Close viewport"><svg width="8" height="8"><path d="M1 1l6 6M7 1L1 7" stroke="#888" strokeWidth="2" /></svg></MdiButton>
        </MdiGroup>
      </MenuBar>
      <ToolbarArea>
        <ToolRow>
          <Side>
            <Group><Grip /><Tools names={['new', 'open', 'save', 'print', 'dbin', 'dbout']} /></Group>
            <Group>
              <Grip /><Tools names={['xy', 'yx', 'xz', 'zx', 'yz', 'zy', 'iso']} />
              {['1', '2', '3', '4'].map(n => <NumberButton key={n}>{n}</NumberButton>)}
              <Tools names={['view']} />
            </Group>
            <Group>
              <Grip /><Tools names={['win1', 'win2', 'win3', 'win4', 'win5', 'table']} /><Divider />
              <Tools names={['annArrow', 'arrow', 'text', 'cursor', 'table', 'legend']} />
            </Group>
          </Side>
          <Side $right>
            <Group>
              <Grip /><Tools names={['palette']} />
              <Combo id="color-code" label="Color code" value="Property defaults" w={138} />
              <Tools names={['cubeTan']} /><Caret />
            </Group>
            <Group><Grip /><Tools names={['meshBlue', 'meshRed', 'meshGreen']} /></Group>
            <Group><Grip /><Tools names={['info']} /></Group>
            <Group>
              <Grip /><ToolButton $on aria-label="Select"><Icon name="cursor" /></ToolButton>
              <Combo id="selection" label="Selection filter" value="All" w={195} />
              <Tools names={['dot', 'cubeOrange']} />
            </Group>
            <Group><Grip /><Tools names={['cubeWire', 'cubeHid', 'cubeGold']} /></Group>
            <Group><Grip /><Tools names={['pan', 'rotate', 'zoom', 'zoomBox', 'fit', 'cycle']} /></Group>
            <Group><Grip /><Tools names={['para', 'persp']} /></Group>
          </Side>
        </ToolRow>
        <ToolRow>
          <Side $right $inset={480}>
            <Group><Grip /><Tools names={['lpart', 'table']} /></Group>
            <Group><Grip /><Tools names={['circR', 'circL', 'circ', 'replace', 'undo', 'redo', 'bars', 'table']} /></Group>
          </Side>
        </ToolRow>
      </ToolbarArea>
      <Body>
        <LeftPanel>
          <Tabs role="tablist">
            <Tab role="tab" $on>Model</Tab><Tab role="tab">Results</Tab><Tab role="tab">Material Library</Tab>
          </Tabs>
          <TabPanel>
            <DbRow>
              <Combo
                id="database" label="Database" value="Model Database" w={221} h={22}
                lead={<svg width="18" height="18" viewBox="0 0 18 18"><g fill="#e8b84a" stroke="#4a3508"><path d="M4 10.500h12v3c-2 3-10 3-12 0z" /><path d="M1 6.500h13v3c-2 3-11 3-13 0z" /><ellipse cx="9" cy="4" rx="7" ry="2.500" /></g></svg>}
              />
              <DbTools>
                <IconButton aria-label="Step"><svg width="9" height="16" viewBox="0 0 9 16"><path d="M4.500 0L9 5.500H0zM4.500 16L9 10.500H0z" fill="#8d8d8d" /></svg></IconButton>
                <IconButton aria-label="Parent"><svg width="16" height="13" viewBox="0 0 16 13"><path d="M.5 12.500v-11h5l1 2h9v9zM6 10h4M7.500 10V5M5.500 7l2-2 2 2" fill="none" stroke="#999" /></svg></IconButton>
                <IconButton aria-label="Filter"><svg width="15" height="14" viewBox="0 0 15 14"><path d="M.500 1.500h3v3h-3zM6.500 4.500h3v3h-3zM11.500 10.500h3v3h-3zM4 3h4v2M8 8v4h3M2 5v5l3 1" fill="none" stroke="#aaa" /></svg></IconButton>
                <IconButton aria-label="Tips"><svg width="15" height="16" viewBox="0 0 15 16"><path d="M7.500 0v2M0 7h3M12 7h3M2 2l2 2M13 2l-2 2" stroke="#222" /><circle cx="7.500" cy="7" r="4" fill="#f2d93e" stroke="#222" /><path d="M5.500 11h4v4h-4z" fill="#777" stroke="#222" /></svg></IconButton>
              </DbTools>
            </DbRow>
            <Tree />
          </TabPanel>
        </LeftPanel>
        <RightPanel>
          <ContextBar>
            <ContextField><label htmlFor="module">Module:</label><Combo id="module" value="Property" w={113} spin /></ContextField>
            <ContextField><label htmlFor="model">Model:</label><Combo id="model" value="Model-1" w={99} spin dim /></ContextField>
            <ContextField><label htmlFor="part">Part:</label><Combo id="part" value="Part-3" w={99} spin /></ContextField>
          </ContextBar>
          <Work>
            <Toolbox>
              {TOOLBOX.map((g, i) => (
                <React.Fragment key={i}>
                  <ToolGroup $rule={g.rule}>
                    {g.rows.map((n, j) => (
                      <BoxButton key={j} $hot={n.endsWith('*')} aria-label={n.replace('*', '')}><Icon name={n.replace('*', '')} /></BoxButton>
                    ))}
                  </ToolGroup>
                  {g.rule && <Rule />}
                </React.Fragment>
              ))}
              <Pointer>
                <svg width="42" height="40" viewBox="0 0 42 40">
                  <circle cx="15" cy="19" r="13" fill="#f0a030" opacity=".25" />
                  <path d="M17 23v15l4-3 3 6 3-1-3-6h5z" fill="#fff" stroke="#000" strokeLinejoin="round" />
                </svg>
              </Pointer>
            </Toolbox>
            <Viewport>
              <svg viewBox="0 0 1528 812" role="img" aria-label="Part-3">
                <path d="M897 192L705 274 550 666l235-47z" fill="#6ee2c6" stroke="#0c1a20" strokeWidth="1.300" />
              </svg>
            </Viewport>
          </Work>
          <BrandStrip>
            <svg width="20" height="20" viewBox="0 0 20 20"><g fill="none" stroke="#10245c" strokeWidth="1.800" strokeLinecap="round"><path d="M7 2c7-2 7 2 1 5M8 8L2 18c8-1 10-9 3-8M18 8c-6-1-7 3-3 5s0 5-4 4" /></g></svg>
            <BrandName>SIMULIA</BrandName>
          </BrandStrip>
        </RightPanel>
      </Body>
      <MessageArea>
        <MsgTabs>
          <MsgTab $on aria-label="Messages"><svg width="22" height="24" viewBox="0 0 22 24"><path d="M3 2h17v18H3z" fill="#dcdccf" stroke="#333" /><path d="M2 20l7-7 2 2-7 7-3 1z" fill="#dba94a" stroke="#333" /></svg></MsgTab>
          <MsgTab aria-label="Command line"><svg width="24" height="26" viewBox="0 0 24 26"><path d="M1 1h22v24H1z" fill="#efe08a" stroke="#333" /><path d="M4 8l4 4-4 4M10 8l4 4-4 4M16 8l4 4-4 4" fill="none" stroke="#222" strokeWidth="2" /></svg></MsgTab>
        </MsgTabs>
        <Messages readOnly aria-label="Messages" defaultValue={MESSAGES} />
      </MessageArea>
      <SizeGrip width="14" height="14" viewBox="0 0 14 14"><path d="M12 2h2M7 7h2M12 7h2M2 12h2M7 12h2M12 12h2" stroke="#999" strokeWidth="2" /></SizeGrip>
      <Taskbar>
        <TaskButton aria-label="Start"><svg width="16" height="16" viewBox="0 0 16 16"><path d="M0 2l7-1v6.500H0zM8 1l8-1v7.500H8zM0 8.500h7V15l-7-1zM8 8.500h8V16l-8-1z" fill="#fff" /></svg></TaskButton>
        <TaskButton aria-label="Calculator"><svg width="12" height="16" viewBox="0 0 12 16"><path d="M0 0h12v16H0z" fill="#7d98aa" /><path d="M1 1h10v3H1z" fill="#4ec0e6" /><path d="M2 6.500h8M2 9.500h8M2 12.500h8" stroke="#2b3d4c" strokeWidth="2" strokeDasharray="2 1" /></svg></TaskButton>
        <TaskButton aria-label="Paint"><svg width="18" height="18" viewBox="0 0 18 18"><path d="M1 10c0-5 6-7 10-4 3 3 1 9-4 9-2 0-1-3-3-3s-3 0-3-2z" fill="#dfe6ea" /><circle cx="5" cy="9" r="1.500" fill="#3aa0dc" /><circle cx="8" cy="12" r="1.500" fill="#4caf50" /><path d="M14 2v13" stroke="#d9a066" strokeWidth="2" /><path d="M13 0h3v5h-3z" fill="#b96b3c" /></svg></TaskButton>
        <TaskButton $run aria-label="Chrome"><svg width="17" height="17" viewBox="0 0 18 18"><circle cx="9" cy="9" r="8.500" fill="#34a853" /><path d="M9 9L1.600 4.700A8.500 8.500 0 0116.400 4.700z" fill="#ea4335" /><path d="M9 9l7.400-4.300A8.500 8.500 0 019 17.500z" fill="#fbbc05" /><circle cx="9" cy="9" r="4" fill="#fff" /><circle cx="9" cy="9" r="3" fill="#4285f4" /></svg></TaskButton>
        <TaskButton $run aria-label="Explorer"><svg width="17" height="15" viewBox="0 0 17 15"><path d="M0 0h6l2 2h9v12H0z" fill="#f3c34f" /><path d="M0 5h17v9H0z" fill="#ffe08a" /><path d="M4 14v-4h9v4h-2v-2H6v2z" fill="#3f9bdc" /></svg></TaskButton>
        <TaskButton $run aria-label="Cubes"><svg width="17" height="17" viewBox="0 0 17 17"><path d="M0 0h17v17H0z" fill="#000" /><path d="M8.500 1l3 2v3l-3 2-3-2V3zM4.500 8l3 2v3l-3 2-3-2v-3zM12.500 8l3 2v3l-3 2-3-2v-3z" fill="none" stroke="#d9902a" strokeWidth="1.300" /></svg></TaskButton>
        <TaskButton $run aria-label="Command prompt"><svg width="17" height="14" viewBox="0 0 17 14"><path d="M.5.500h16v13H.5z" fill="#000" stroke="#ccc" /><path d="M0 1.500h17" stroke="#ccc" strokeWidth="2" /><text x="2" y="10" fontSize="6" fontWeight="700" fill="#fff" fontFamily="Liberation Mono">C:\_</text></svg></TaskButton>
        <TaskButton $run $on aria-label="Abaqus/CAE"><AbaqusMark /></TaskButton>
        <TaskButton $run aria-label="Gears"><svg width="17" height="17" viewBox="0 0 17 17"><path d="M0 0h17v17H0z" fill="#000" /><circle cx="6" cy="10" r="4" fill="none" stroke="#e0962a" strokeWidth="2.500" strokeDasharray="2.500 .6" /><circle cx="12.500" cy="4.500" r="2.500" fill="none" stroke="#e0962a" strokeWidth="2" strokeDasharray="2 .6" /></svg></TaskButton>
        <Tray>
          <svg width="12" height="8" viewBox="0 0 12 8"><path d="M1 7l5-5 5 5" fill="none" stroke="#fff" strokeWidth="1.500" /></svg>
          <svg width="12" height="16" viewBox="0 0 12 16"><rect x="3" y="0" width="6" height="11" rx="1" fill="#fff" /><path d="M1 8v4h10V8M6 12v3M3 15.500h6" fill="none" stroke="#fff" /></svg>
          <svg width="17" height="14" viewBox="0 0 17 14"><path d="M.5 5h3l3-3v10l-3-3h-3zM8.500 5c1 1 1 3 0 4M11 3c2 2 2 6 0 8M13.500 1c3 3 3 9 0 12" fill="none" stroke="#fff" /></svg>
          <svg width="23" height="13" viewBox="0 0 23 13"><path d="M.5.500h22v12H.5z" fill="none" stroke="#fff" /><path d="M3 4h17M3 6.500h17M5 9.500h13" stroke="#fff" strokeDasharray="2 1" /></svg>
          <Ime>A</Ime>
          <svg width="16" height="16" viewBox="0 0 16 16"><rect width="16" height="16" rx="2" fill="#2f84dd" /><circle cx="8" cy="8" r="4.500" fill="none" stroke="#fff" strokeWidth="2" /><path d="M10 11l3 2" stroke="#fff" strokeWidth="2" /></svg>
          <Clock>16:50</Clock>
        </Tray>
      </Taskbar>
      <Watermark>
        <svg width="116" height="120" viewBox="0 0 116 120">
          <path d="M20 8C45-4 78 0 95 26c18 28 24 62 12 81-8 14-26 14-40 6C42 98 12 78 5 55-1 36 4 16 20 8z" fill="#cfd628" />
          <path d="M46 13C60 1 82-2 95 12c18 18 21 46 16 66-6 24-28 40-56 40C30 118 10 98 7 76c-2-24 18-45 39-63z" fill="#2089a8" />
          <path d="M46 13C54 7 64 4 74 6c10 4 17 12 23 22 12 22 17 42 15 47-5 24-22 38-44 42C46 104 18 88 8 64 10 42 30 27 46 13z" fill="#57a948" />
          <text x="59" y="108" fontSize="138" fontWeight="700" textAnchor="middle" fill="#fff" fontFamily="Liberation Serif, serif">Y</text>
        </svg>
        <WatermarkText><span>云</span><span>工</span><span>仿</span></WatermarkText>
      </Watermark>
    </Page>
  );
}
